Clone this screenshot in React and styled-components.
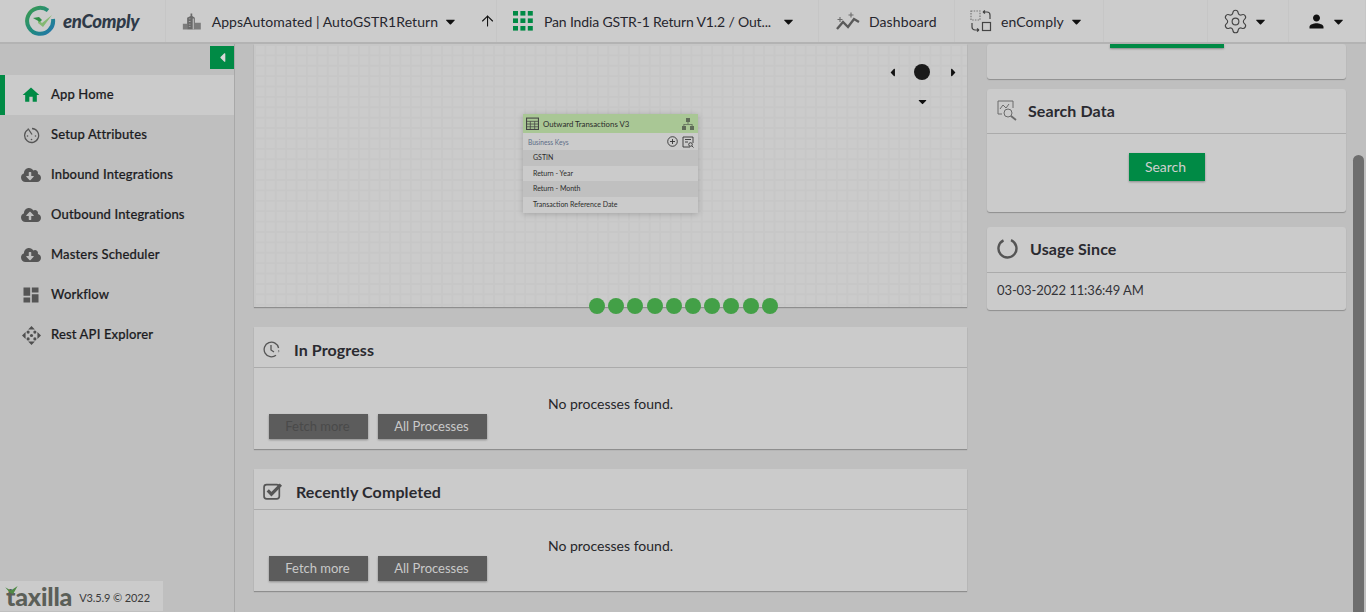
import React from 'react';
import styled, { createGlobalStyle } from 'styled-components';
import { FaCloudDownloadAlt, FaCloudUploadAlt, FaCaretDown, FaCaretLeft, FaCaretRight } from 'react-icons/fa';
import { MdDashboard, MdHome, MdPerson } from 'react-icons/md';
import { ArrowUp, Settings } from 'lucide-react';

const GlobalStyle = createGlobalStyle`
  html, body {
    margin: 0;
    height: 100%;
    overflow: hidden;
    background: #bfbfbf;
    font-family: Lato, "Open Sans", sans-serif;
    color: #1f1f1f;
  }
  * { box-sizing: border-box; }
`;

const Page = styled.div`
  display: flex;
  flex-direction: column;
  width: 1366px;
  height: 612px;
  position: relative;
  overflow: hidden;
`;

const Header = styled.header`
  display: flex;
  align-items: stretch;
  height: 44px;
  flex: none;
  background: #cccccc;
  border-bottom: 2px solid #b3b3b3;
`;

const HeaderCell = styled.div`
  display: flex;
  align-items: center;
  width: ${(p) => p.$width}px;
  padding-left: ${(p) => p.$pad || 0}px;
  border-right: 1px solid #c6c6c6;
  font-size: 14px;
  color: #26262e;
  white-space: nowrap;
`;

const LogoText = styled.span`
  font-size: 18.6px;
  font-weight: 900;
  font-style: italic;
  color: #2f3a48;
  margin-left: 7px;
  letter-spacing: -0.3px;
`;

const CellLabel = styled.span`
  margin-left: ${(p) => p.$gap || 10}px;
  letter-spacing: ${(p) => p.$spacing || 0}px;
`;

const Caret = styled(FaCaretDown)`
  color: #111;
  font-size: 15px;
  margin-left: ${(p) => p.$gap || 7}px;
`;

const UpArrow = styled(ArrowUp)`
  margin-left: 22px;
  color: #111;
`;

const Body = styled.div`
  flex: 1;
  display: flex;
  min-height: 0;
`;

const Sidebar = styled.aside`
  width: 235px;
  flex: none;
  display: flex;
  flex-direction: column;
  background: #bfbfbf;
  border-right: 1px solid #a8a8a8;
`;

const ToggleRow = styled.div`
  display: flex;
  justify-content: flex-end;
  height: 31px;
  padding-top: 2px;
`;

const Toggle = styled.div`
  width: 24px;
  height: 23px;
  display: flex;
  align-items: center;
  justify-content: center;
  background: #008a45;
  color: #d8d8d8;
  font-size: 15px;
`;

const NavItem = styled.div`
  height: 40px;
  display: flex;
  align-items: center;
  font-size: 13px;
  font-weight: 500;
  letter-spacing: 0.15px;
  color: #1c1c22;
  padding-left: ${(p) => (p.$active ? 16 : 21)}px;
  background: ${(p) => (p.$active ? '#cbcbcb' : 'transparent')};
  border-left: ${(p) => (p.$active ? '5px solid #008a45' : 'none')};
  -webkit-text-stroke: 0.2px #1c1c22;
`;

const NavIcon = styled.span`
  width: 20px;
  margin-right: 10px;
  display: flex;
  justify-content: center;
  color: ${(p) => p.$color || '#555555'};
  font-size: ${(p) => p.$size || 20}px;
`;

const NavLabel = styled.span`
  padding-bottom: 2px;
`;

const SideFooter = styled.div`
  margin-top: auto;
  margin-bottom: 1px;
  width: 163px;
  height: 30px;
  display: flex;
  align-items: center;
  padding-left: 6px;
  background: #cbcbcb;
`;

const Brand = styled.span`
  font-size: 25px;
  font-weight: 900;
  color: #5b5f58;
  line-height: 1;
  margin-right: 7px;
  letter-spacing: -0.2px;
  position: relative;
`;

const BrandLeaf = styled.svg`
  position: absolute;
  left: -1px;
  top: 2px;
`;

const Version = styled.span`
  font-size: 11px;
  letter-spacing: -0.1px;
  color: #3a3a3a;
  padding-top: 3px;
`;

const Main = styled.main`
  flex: 1;
  min-width: 0;
  display: grid;
  grid-template-columns: 713px 359px;
  column-gap: 20px;
  align-items: start;
  padding-left: 19px;
`;

const Column = styled.div`
  display: flex;
  flex-direction: column;
  gap: ${(p) => p.$gap || 20}px;
`;

const Canvas = styled.section`
  position: relative;
  height: 263px;
  background-color: #cbcbcb;
  background-image:
    linear-gradient(#c7c7c7 1.5px, transparent 1.5px),
    linear-gradient(90deg, #c7c7c7 1.5px, transparent 1.5px);
  background-size: 10.4px 10.4px;
  box-shadow: 0 1px 1px #8e8e8e;
`;

const PanControl = styled.span`
  position: absolute;
  left: ${(p) => p.$x}px;
  top: ${(p) => p.$y}px;
  font-size: 13px;
  line-height: 0;
  color: #111;
`;

const PanCenter = styled.span`
  position: absolute;
  left: 660px;
  top: 20px;
  width: 16px;
  height: 16px;
  border-radius: 50%;
  background: #1a1a1a;
`;

const EntityNode = styled.div`
  position: absolute;
  left: 269px;
  top: 70px;
  width: 175px;
  background: #cbcbcb;
  box-shadow: 0 1px 6px rgba(0, 0, 0, 0.2);
  font-size: 7px;
  color: #2c2c2c;
`;

const EntityTitle = styled.div`
  display: flex;
  align-items: center;
  height: 19px;
  padding: 0 4px 0 3px;
  background: #a9c795;
  font-size: 7.8px;
`;

const EntityName = styled.span`
  flex: 1;
  margin-left: 4px;
`;

const KeysRow = styled.div`
  display: flex;
  align-items: center;
  height: 17px;
  padding: 0 4px 0 5px;
  color: #5b6b86;
  font-size: 6.6px;
`;

const KeysLabel = styled.span`
  flex: 1;
`;

const KeyRow = styled.div`
  height: ${(p) => p.$h || 15.5}px;
  display: flex;
  align-items: center;
  padding: 0 0 1px 10px;
  background: ${(p) => (p.$dark ? '#c0c0c0' : 'transparent')};
`;

const Dots = styled.div`
  position: absolute;
  left: 335px;
  bottom: -7px;
  display: flex;
  gap: 3.2px;
`;

const Dot = styled.span`
  width: 16px;
  height: 16px;
  border-radius: 50%;
  background: #43a047;
`;

const Card = styled.section`
  background: #cbcbcb;
  border-radius: ${(p) => (p.$square ? 0 : 3)}px;
  box-shadow: 0 1px 1px #8e8e8e;
  margin-top: ${(p) => p.$offset || 0}px;
`;

const CardHead = styled.div`
  height: ${(p) => p.$h || 41}px;
  display: flex;
  align-items: center;
  padding-left: ${(p) => p.$pad || 10}px;
  padding-top: ${(p) => p.$top || 0}px;
  padding-bottom: ${(p) => p.$bottom || 0}px;
  border-bottom: 1px solid #ababab;
  font-size: 16px;
  font-weight: 700;
  letter-spacing: 0.1px;
  color: #2a2a30;
`;

const HeadIcon = styled.span`
  display: flex;
  width: 21px;
  margin-right: ${(p) => p.$gap || 10}px;
  color: #555555;
`;

const ProcessBody = styled.div`
  height: 81px;
  padding: 27px 15px 0;
  font-size: 14px;
  color: #26262a;
`;

const EmptyText = styled.div`
  text-align: center;
  height: 19px;
`;

const ButtonRow = styled.div`
  display: flex;
  gap: 10px;
`;

const GreyButton = styled.button`
  height: 25px;
  width: ${(p) => p.$width}px;
  padding: 0 2px 2px 0;
  border: none;
  background: #5c5c5c;
  box-shadow: 0 1px 2px #8a8a8a;
  font: 13px Lato, sans-serif;
  color: ${(p) => (p.disabled ? '#4a4a4a' : '#c9c9c9')};
`;

const TopCard = styled(Card)`
  height: 35px;
  display: flex;
  justify-content: center;
`;

const TopButton = styled.div`
  width: 114px;
  height: 4px;
  background: #008a45;
  box-shadow: 0 1px 2px #8a8a8a;
`;

const SearchBody = styled.div`
  height: 78px;
  padding-top: 19px;
  display: flex;
  justify-content: center;
`;

const GreenButton = styled.button`
  width: 76px;
  height: 28px;
  padding: 0 2px 2px 0;
  border: none;
  background: #008a45;
  box-shadow: 0 1px 2px #8a8a8a;
  font: 14px Lato, sans-serif;
  color: #cfcfcf;
`;

const UsageBody = styled.div`
  height: 37px;
  display: flex;
  align-items: center;
  padding: 0 0 3px 10px;
  font-size: 13px;
  letter-spacing: -0.1px;
  color: #333338;
`;

const ScrollThumb = styled.div`
  position: absolute;
  right: 2px;
  top: 155px;
  bottom: -6px;
  width: 11px;
  border-radius: 6px;
  background: #6e6e6e;
`;

const LogoMark = () => (
  <svg width="32" height="32" viewBox="0 0 32 32">
    <defs>
      <linearGradient id="ring" x1="0" y1="0" x2="1" y2="1">
        <stop offset="0" stopColor="#3c9a4e" />
        <stop offset="0.55" stopColor="#1f8a80" />
        <stop offset="1" stopColor="#2474ae" />
      </linearGradient>
    </defs>
    <path d="M24 5.500A13 13 0 1 0 29 14" fill="none" stroke="url(#ring)" strokeWidth="4" />
    <path d="M14 15l4 3 10-8-9 12-5-4z" fill="#84b872" />
    <path d="M9 13l6-1 3 3-2 2z" fill="#2f8f46" />
  </svg>
);

const BuildingIcon = () => (
  <svg width="23" height="21" viewBox="0 0 23 21" fill="#6a6a6a">
    <path d="M6 6l4-2V1h2v3l3 2v14H6z" />
    <path d="M15 12h7v8h-7zM1 13h5v7H1z" fill="#7c7c7c" />
    <path d="M8 7h2v1H8zM8 10h2v1H8zM8 13h2v1H8zM8 16h2v1H8z" fill="#a8a8a8" />
    <path d="M12.500 7h1.500v13h-1.500z" fill="#b5b5b5" />
  </svg>
);

const GridIcon = () => (
  <svg width="20" height="20" viewBox="0 0 20 20" fill="#008a45">
    {[0, 7.4, 14.8].map((x) =>
      [0, 7.4, 15].map((y) => <rect key={`${x}-${y}`} x={x} y={y} width="5" height="4.600" />)
    )}
  </svg>
);

const DashboardIcon = () => (
  <svg width="24" height="20" viewBox="0 0 24 20" fill="none" stroke="#5a5a5a" strokeWidth="2.400">
    <path d="M1 18l6-7 5 5 6-8 5 3" />
    <path d="M4 6v5M1.500 8.500h5M15 1.500v5M12.500 4h5" stroke="#6a6a6a" strokeWidth="1.100" />
  </svg>
);

const SwitchIcon = () => (
  <svg width="22" height="22" viewBox="0 0 22 22" fill="none" stroke="#444" strokeWidth="1.200">
    <rect x="1" y="1" width="9" height="9" strokeDasharray="1.500 1.200" stroke="#777" />
    <rect x="12.500" y="12.500" width="8" height="8" />
    <path d="M13 2h4a3 3 0 0 1 3 3v4M13 2l2-1.500M13 2l2 1.500M9 20H5a3 3 0 0 1-3-3v-4M9 20l-2-1.500M9 20l-2 1.500" />
  </svg>
);

const SetupIcon = () => (
  <svg width="17" height="17" viewBox="0 0 17 17" fill="none" stroke="#555" strokeWidth="1.300">
    <path d="M5 2.500a7 7 0 1 0 4-1" />
    <path d="M5 1.500l4 6" />
    <circle cx="4.500" cy="9" r="0.800" fill="#555" stroke="none" />
    <circle cx="8.500" cy="12.500" r="0.800" fill="#555" stroke="none" />
    <circle cx="12.500" cy="9" r="0.800" fill="#555" stroke="none" />
  </svg>
);

const ApiIcon = () => (
  <svg width="19" height="19" viewBox="0 0 18 18" fill="#4f4f4f">
    <path d="M9 0l3.200 3.400H5.800zM9 18l-3.200-3.400h6.400zM0 9l3.400-3.200v6.400zM18 9l-3.400 3.200V5.800z" />
    <circle cx="5.800" cy="5.800" r="1.500" />
    <circle cx="12.200" cy="5.800" r="1.500" />
    <circle cx="5.800" cy="12.200" r="1.500" />
    <circle cx="12.200" cy="12.200" r="1.500" />
    <circle cx="9" cy="9" r="1.500" />
  </svg>
);

const ClockIcon = () => (
  <svg width="17" height="17" viewBox="0 0 17 17" fill="none" stroke="#555" strokeWidth="1.300">
    <path d="M13 14.200A7.300 7.300 0 1 1 15.600 7" />
    <path d="M15.800 9.500l-.6 2" strokeDasharray="1 1" />
    <path d="M8 4v5l3 2" />
  </svg>
);

const CheckIcon = () => (
  <svg width="20" height="18" viewBox="0 0 19 17" fill="none" stroke="#555">
    <rect x="1" y="2.500" width="14.500" height="13.500" rx="2.500" strokeWidth="1.600" />
    <path d="M4.500 8l3.500 3.500L17 2.500" strokeWidth="3" />
  </svg>
);

const SearchDataIcon = () => (
  <svg width="21" height="21" viewBox="0 0 21 21" fill="none" stroke="#6a6a6a" strokeWidth="1">
    <path d="M5 14H1V1h15v7" />
    <path d="M3 9l3-4 3 3 3-4" />
    <circle cx="11" cy="13" r="4" />
    <path d="M14 16l5 4" strokeWidth="1.800" />
  </svg>
);

const SpinnerIcon = () => (
  <svg width="21" height="21" viewBox="0 0 21 21" fill="none" stroke="#555" strokeWidth="2.400">
    <path d="M14 2.200a9 9 0 1 1-7.500.2" />
  </svg>
);

const TableIcon = () => (
  <svg width="13" height="13" viewBox="0 0 12 12" fill="none" stroke="#444" strokeWidth="1">
    <rect x="0.500" y="1" width="11" height="10.500" />
    <path d="M.5 4h11M.5 6.500h11M.5 9h11M4 4v7.500M8 4v7.500" strokeWidth="0.700" />
  </svg>
);

const TreeIcon = () => (
  <svg width="12" height="12" viewBox="0 0 12 12" fill="#5f6b58">
    <rect x="4" y="0" width="4" height="4" />
    <rect x="0" y="8" width="4" height="4" />
    <rect x="8" y="8" width="4" height="4" />
    <path d="M5.600 4h.8v2h4.100v2h-.8V6.800H2.300V8h-.8V6h4.100z" />
  </svg>
);

const AddIcon = () => (
  <svg width="11" height="11" viewBox="0 0 11 11" fill="none" stroke="#333" strokeWidth="0.900">
    <circle cx="5.500" cy="5.500" r="4.800" />
    <path d="M5.500 3v5M3 5.500h5" />
  </svg>
);

const FindGlyph = styled.svg`
  margin-left: 4px;
`;

const FindIcon = () => (
  <FindGlyph width="12" height="12" viewBox="0 0 12 12" fill="none" stroke="#333" strokeWidth="0.900">
    <path d="M8 11H1V1h10v6" />
    <path d="M3 3.500h6M3 6h3" />
    <circle cx="8.500" cy="8.500" r="1.800" />
    <path d="M10 10l1.500 1.500" />
  </FindGlyph>
);

const navItems = [
  { label: 'Setup Attributes', icon: <SetupIcon /> },
  { label: 'Inbound Integrations', icon: <FaCloudDownloadAlt /> },
  { label: 'Outbound Integrations', icon: <FaCloudUploadAlt /> },
  { label: 'Masters Scheduler', icon: <FaCloudDownloadAlt /> },
  { label: 'Workflow', icon: <MdDashboard /> },
  { label: 'Rest API Explorer', icon: <ApiIcon /> }
];

const ProcessCard = ({ icon, title, fetchDisabled, iconGap }) => (
  <Card $square>
    <CardHead $top={4} $pad={9}>
      <HeadIcon $gap={iconGap}>{icon}</HeadIcon>
      {title}
    </CardHead>
    <ProcessBody>
      <EmptyText>No processes found.</EmptyText>
      <ButtonRow>
        <GreyButton $width={99} disabled={fetchDisabled}>Fetch more</GreyButton>
        <GreyButton $width={109}>All Processes</GreyButton>
      </ButtonRow>
    </ProcessBody>
  </Card>
);

const App = () => (
  <Page>
    <GlobalStyle />
    <Header>
      <HeaderCell $width={166} $pad={24}>
        <LogoMark />
        <LogoText>enComply</LogoText>
      </HeaderCell>
      <HeaderCell $width={331} $pad={16}>
        <BuildingIcon />
        <CellLabel $gap={10} $spacing={0.07}>AppsAutomated | AutoGSTR1Return</CellLabel>
        <Caret $gap={6} />
        <UpArrow size={20} strokeWidth={1.5} />
      </HeaderCell>
      <HeaderCell $width={322} $pad={16}>
        <GridIcon />
        <CellLabel $gap={11} $spacing={-0.15}>Pan India GSTR-1 Return V1.2 / Out...</CellLabel>
        <Caret $gap={10} />
      </HeaderCell>
      <HeaderCell $width={136} $pad={17}>
        <DashboardIcon />
        <CellLabel $gap={9} $spacing={0.1}>Dashboard</CellLabel>
      </HeaderCell>
      <HeaderCell $width={149} $pad={15}>
        <SwitchIcon />
        <CellLabel $gap={9} $spacing={0.1}>enComply</CellLabel>
        <Caret $gap={5} />
      </HeaderCell>
      <HeaderCell $width={104} />
      <HeaderCell $width={81} $pad={14}>
        <Settings size={27} strokeWidth={1} color="#444" />
        <Caret $gap={4} />
      </HeaderCell>
      <HeaderCell $width={77} $pad={17}>
        <MdPerson size={21} color="#111" />
        <Caret $gap={4} />
      </HeaderCell>
    </Header>
    <Body>
      <Sidebar>
        <ToggleRow>
          <Toggle><FaCaretLeft /></Toggle>
        </ToggleRow>
        <NavItem $active>
          <NavIcon $color="#008a45" $size={20}><MdHome /></NavIcon>
          <NavLabel>App Home</NavLabel>
        </NavItem>
        {navItems.map((item) => (
          <NavItem key={item.label}>
            <NavIcon>{item.icon}</NavIcon>
            <NavLabel>{item.label}</NavLabel>
          </NavItem>
        ))}
        <SideFooter>
          <Brand>
            <BrandLeaf width="14" height="9" viewBox="0 0 12 8">
              <path d="M0 1l5 3 6-4-4 7-3-1z" fill="#4f8a46" />
            </BrandLeaf>
            taxilla
          </Brand>
          <Version>V3.5.9 © 2022</Version>
        </SideFooter>
      </Sidebar>
      <Main>
        <Column>
          <Canvas>
            <PanControl $x={632} $y={22}><FaCaretLeft /></PanControl>
            <PanCenter />
            <PanControl $x={693} $y={22}><FaCaretRight /></PanControl>
            <PanControl $x={662} $y={51}><FaCaretDown /></PanControl>
            <EntityNode>
              <EntityTitle>
                <TableIcon />
                <EntityName>Outward Transactions V3</EntityName>
                <TreeIcon />
              </EntityTitle>
              <KeysRow>
                <KeysLabel>Business Keys</KeysLabel>
                <AddIcon />
                <FindIcon />
              </KeysRow>
              <KeyRow $dark>GSTIN</KeyRow>
              <KeyRow>Return - Year</KeyRow>
              <KeyRow $dark>Return - Month</KeyRow>
              <KeyRow $h={16}>Transaction Reference Date</KeyRow>
            </EntityNode>
            <Dots>
              {Array.from({ length: 10 }, (_, i) => <Dot key={i} />)}
            </Dots>
          </Canvas>
          <ProcessCard icon={<ClockIcon />} title="In Progress" fetchDisabled />
          <ProcessCard icon={<CheckIcon />} title="Recently Completed" iconGap={12} />
        </Column>
        <Column $gap={10}>
          <TopCard><TopButton /></TopCard>
          <Card>
            <CardHead $h={45} $bottom={2}>
              <HeadIcon><SearchDataIcon /></HeadIcon>
              Search Data
            </CardHead>
            <SearchBody><GreenButton>Search</GreenButton></SearchBody>
          </Card>
          <Card $offset={5}>
            <CardHead $h={46} $bottom={2}>
              <HeadIcon $gap={12}><SpinnerIcon /></HeadIcon>
              Usage Since
            </CardHead>
            <UsageBody>03-03-2022 11:36:49 AM</UsageBody>
          </Card>
        </Column>
      </Main>
    </Body>
    <ScrollThumb />
  </Page>
);

export default App;
